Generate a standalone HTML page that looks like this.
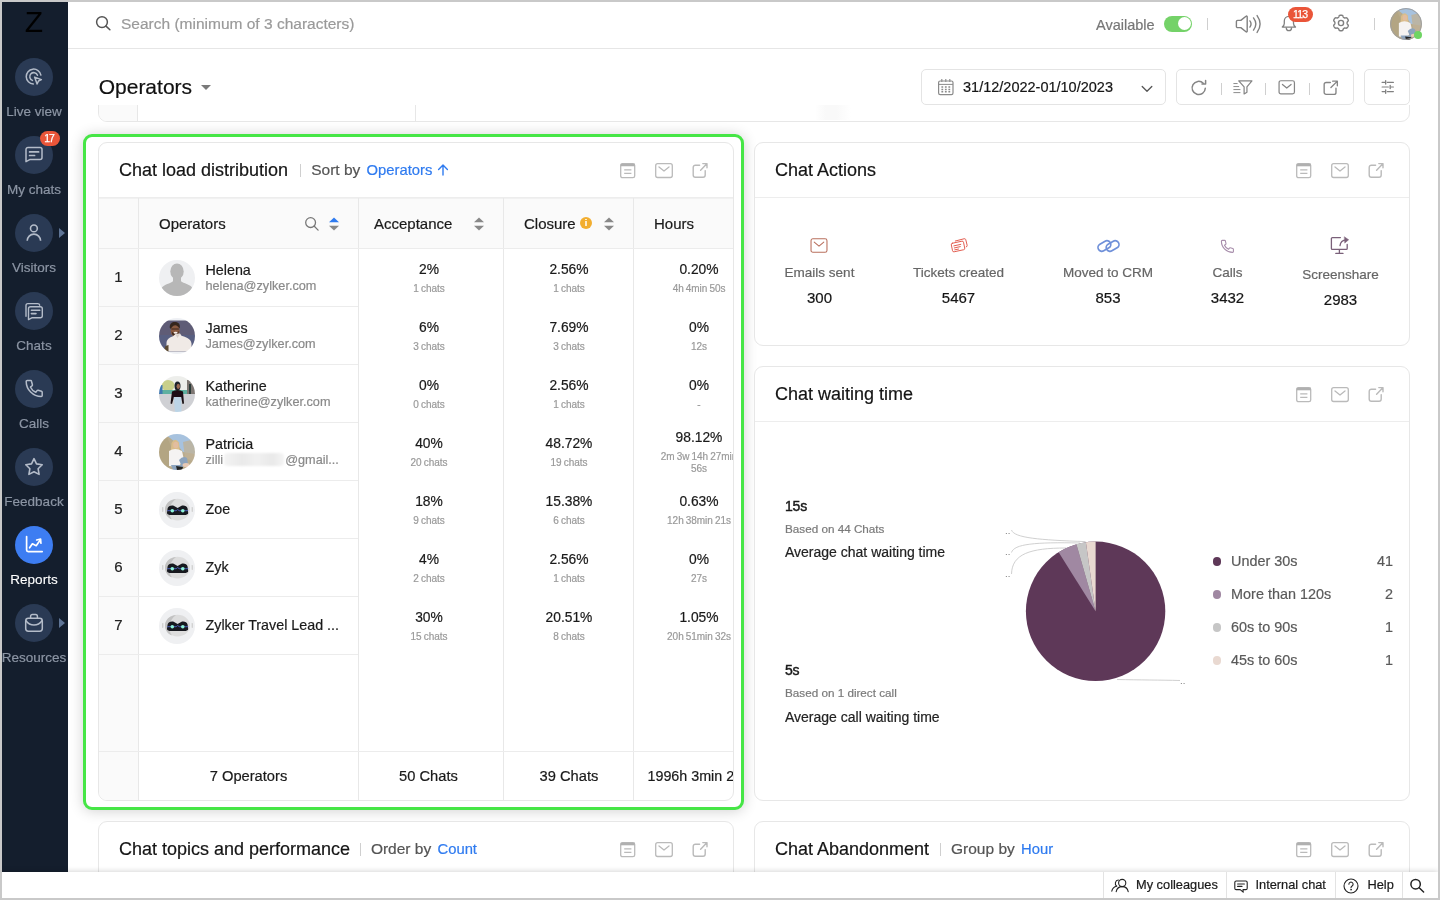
<!DOCTYPE html>
<html lang="en">
<head>
<meta charset="utf-8">
<title>Operators - Reports</title>
<style>
*{box-sizing:border-box;margin:0;padding:0}
html,body{width:1440px;height:900px;overflow:hidden;background:#c9c9c9;font-family:"Liberation Sans",sans-serif;color:#111;-webkit-text-stroke:.2px}
#app{position:absolute;left:2px;top:2px;width:1436px;height:896px;background:#fff;overflow:hidden;will-change:transform}
.abs{position:absolute}
svg{display:block;overflow:visible}
/* sidebar */
#side{position:absolute;left:0;top:0;width:66px;height:896px;background:#141e2d}
.nav{position:absolute;left:0;width:66px;height:78px}
.nav .c{position:absolute;left:13px;top:0;width:38px;height:38px;border-radius:50%;background:#2a3a54}
.nav .c svg{position:absolute;left:9px;top:9px}
.nav .t{position:absolute;left:-11px;width:86px;top:45px;text-align:center;font-size:13.5px;line-height:18px;color:#8c95a4;white-space:nowrap}
.nav.on .c{background:#3d7df2}
.nav.on .t{color:#fff;-webkit-text-stroke:.1px}
.nav .ar{position:absolute;left:57px;top:13.500px;width:0;height:0;border-left:6px solid #5f7596;border-top:5.500px solid transparent;border-bottom:5.500px solid transparent}
.badge{position:absolute;background:#ea5539;color:#fff;font-weight:400;-webkit-text-stroke:.25px #fff;text-align:center;border-radius:10px}
/* top bar */
#top{position:absolute;left:66px;top:0;width:1370px;height:47px;background:#fff;border-bottom:1px solid #e6e6e6}
/* cards */
.card{position:absolute;background:#fff;border:1px solid #e7e7e7;border-radius:9px}
.card .hd{position:absolute;left:0;top:0;right:0;height:55px;border-bottom:1px solid #ededed}
.ttl{position:absolute;left:20px;top:16px;font-size:18px;line-height:22px;color:#151515;white-space:nowrap}
.sub{position:absolute;top:17px;font-size:15.500px;line-height:20px;color:#555;white-space:nowrap}
.sub b{font-weight:400;color:#2f7bf0;font-size:14.800px}
.vsep{position:absolute;width:1px;background:#cfcfcf}
.hic{position:absolute;top:18.800px;margin-left:-1.500px}
.hl{position:absolute;left:81px;top:132px;width:661px;height:676px;border:3px solid #46e646;border-radius:9px;box-shadow:0 1px 14px rgba(0,0,0,.19);background:#fff}
.hic{width:20px;height:18px}
.tb{position:absolute;left:0;top:1px;width:634px;height:656px}
.th{position:absolute;left:0;top:54px;width:634px;height:50px;background:#fafafa;border-top:1px solid #f1f1f1}
.ixbg{position:absolute;left:0;top:104px;width:39px;height:552px;background:#fafafa}
.vl{position:absolute;top:54px;width:1px;height:602px;background:#e8e8e8}
.hl2{position:absolute;height:1px;background:#ececec}
.thl{position:absolute;top:70px;font-size:15px;line-height:20px;color:#1a1a1a;white-space:nowrap}
.r{position:absolute;left:0;width:700px;height:57px}
.ix{position:absolute;left:0;width:39px;top:18.200px;text-align:center;font-size:15px;line-height:20px;color:#222}
.av{position:absolute;left:60px;top:10.500px;width:36px;height:36px}
.nm{position:absolute;left:106.500px;top:10.500px;font-size:14.300px;line-height:20px;color:#1a1a1a;white-space:nowrap}
.nm.one{top:18px}
.em{position:absolute;left:106.500px;top:28.300px;font-size:12.700px;line-height:18px;color:#8a8a8a;white-space:nowrap}
.blur{display:inline-block;width:60px;height:13px;vertical-align:-2px;margin:0 1px;background:linear-gradient(90deg,#f3f3f3,#eaeaea 30%,#f1f1f1 55%,#e9e9e9 80%,#f4f4f4);border-radius:4px;filter:blur(1.200px);overflow:hidden;color:transparent}
.v{position:absolute;width:140px;top:0;text-align:center}
.v .p{position:absolute;left:1px;width:140px;top:11px;font-size:13.800px;line-height:20px;color:#1a1a1a}
.v .s{position:absolute;left:1px;width:140px;top:33.500px;font-size:10px;line-height:12px;color:#9a9a9a;word-spacing:-.6px;letter-spacing:-.05px}
.v.two .p{top:5px}
.v.two .s{top:27.500px}
.ft{position:absolute;top:622px;font-size:14.700px;line-height:20px;color:#1a1a1a;text-align:center;white-space:nowrap}
.ca{position:absolute;top:95px;width:140px;height:80px;text-align:center}
.ca svg{margin:0 auto}
.ca .l{position:absolute;left:-20px;width:180px;top:25.700px;font-size:13.500px;line-height:18px;color:#666;white-space:nowrap}
.ca .n{position:absolute;left:0;width:140px;top:49.500px;font-size:15px;line-height:20px;color:#151515}
.w1{position:absolute;left:30px;margin-top:0;font-size:14px;line-height:20px;font-weight:400;color:#1a1a1a;-webkit-text-stroke:.45px #1a1a1a;letter-spacing:-.2px}
.w2{position:absolute;left:30px;margin-top:1px;font-size:11.700px;line-height:16px;color:#7a7a7a;white-space:nowrap}
.w3{position:absolute;left:30px;margin-top:0;font-size:14px;line-height:20px;color:#222;white-space:nowrap}
.lg{position:absolute;left:457.500px;margin-top:-.500px;width:180.500px;height:20px;font-size:14.400px;line-height:20px;color:#5a5a5a;padding-left:18.600px;white-space:nowrap}
.lg i{position:absolute;left:.300px;top:6.700px;width:8.400px;height:8.400px;border-radius:50%}
.lg b{position:absolute;right:0;top:0;font-weight:400}
#bot{position:absolute;left:0;top:870px;width:1436px;height:26px;background:#fff;box-shadow:0 -1px 5px rgba(0,0,0,.16)}
.bd{position:absolute;top:0;width:1px;height:26px;background:#e3e3e3}
.bt{position:absolute;top:4px;font-size:12.800px;line-height:18px;color:#1a1a1a;white-space:nowrap}
</style>
</head>
<body>
<div id="app">
<svg width="0" height="0" style="position:absolute">
 <defs>
  <symbol id="i-panel" viewBox="0 0 20 18" fill="none" stroke="#bababa"><rect x="2.700" y="1.700" width="14" height="14" rx="1.800" stroke-width="1.300"/><path d="M2.700 3h14" stroke-width="2.600" stroke="#b0b0b0"/><path d="M6.200 7.800h7.200M6.200 11.400h7.200" stroke-width="1.200"/></symbol>
  <symbol id="i-mail" viewBox="0 0 20 18" fill="none" stroke="#bababa" stroke-width="1.300" stroke-linecap="round" stroke-linejoin="round"><rect x="1.700" y="1.700" width="16.600" height="13.800" rx="2"/><path d="M5 5l5 4 5-4"/></symbol>
  <symbol id="i-exp" viewBox="0 0 20 18" fill="none" stroke="#bababa" stroke-width="1.400" stroke-linecap="round" stroke-linejoin="round"><path d="M14.200 8.600v4.400a2.200 2.200 0 0 1-2.200 2.200H4.400a2.200 2.200 0 0 1-2.200-2.200V5.400a2.200 2.200 0 0 1 2.200-2.200h4.200"/><path d="M9.600 8.200l6-6.200M11.800 1.600h4.200v4.200"/></symbol>

  <clipPath id="cc"><circle cx="18" cy="18" r="18"/></clipPath><filter id="bl" x="-10%" y="-10%" width="120%" height="120%"><feGaussianBlur stdDeviation=".55"/></filter>
  <symbol id="av-def" viewBox="0 0 36 36"><g clip-path="url(#cc)"><rect width="36" height="36" fill="#eff0f2"/><ellipse cx="18" cy="11.400" rx="6.700" ry="8" fill="#b7b7b7"/><path d="M14 17h8v4.200c2.500 2.300 9 2.800 11 6.300l-2 9H5l-2.500-8.500c2.500-4 9-4.300 11.500-6.800z" fill="#b7b7b7"/></g></symbol>
  <symbol id="av-james" viewBox="0 0 36 36"><g clip-path="url(#cc)"><g filter="url(#bl)"><rect width="36" height="36" fill="#eef0f4"/><rect y="2.500" width="36" height="31" fill="#5e5c76"/><rect y="17" width="36" height="16.500" fill="#56608a" opacity=".55"/>
   <path d="M10.800 9.500c-.5-3.500 2-5.500 5-5.500s5.500 1.500 5 5.500l-1 1.500h-8z" fill="#35261f"/><ellipse cx="16.200" cy="13" rx="4.500" ry="5.700" fill="#8a5a40"/><path d="M12.600 13.500q3.500 4.500 7.200-.5l-.5 3.500q-3 3-6 0z" fill="#3f2a1e"/><ellipse cx="16.600" cy="14.800" rx="2" ry="1" fill="#f4ebe6"/><rect x="12.400" y="10.600" width="7.600" height="1" rx=".5" fill="#2c1d16" opacity=".8"/>
   <path d="M7.500 33.500v-8c0-4 3-6 6.500-7.200l2.500-2.300 4.500-.5 1.500 2.300c4 1.200 9.500 2.700 10 7.700v8z" fill="#f0eae6"/><path d="M16.500 16.500l2 3.500 2.500-4z" fill="#d9cfc8"/><path d="M4.500 33.500l2-5.500 3-1v6.500z" fill="#5a4a30"/></g></g></symbol>
  <symbol id="av-kath" viewBox="0 0 36 36"><g clip-path="url(#cc)"><g filter="url(#bl)"><rect width="36" height="36" fill="#d9d9d9"/><rect width="36" height="15" fill="#edeeeb"/><ellipse cx="9" cy="9.500" rx="6.500" ry="5.500" fill="#c8cf8a"/><rect y="14" width="29" height="4.500" fill="#5fb0a0"/><rect x="0" y="9" width="3.500" height="9" fill="#3f78b0"/><rect x="28" y="4" width="8" height="17" fill="#7d7672"/><rect x="30" y="8" width="2" height="10" fill="#2c3a38"/><rect y="18" width="36" height="18" fill="#cfd0d4"/>
   <ellipse cx="18.500" cy="10" rx="3" ry="4.600" fill="#1d2229"/><ellipse cx="19.300" cy="10.300" rx="1.700" ry="2.600" fill="#9b6a52"/><path d="M13 15.500q5.500-3 11 0l1 12-1.500.5-1.500-7h-7l-2 7-1.500-.5z" fill="#1a1114"/><path d="M14.800 21h7.400l.3 15h-6.500z" fill="#bcd4e6"/></g></g></symbol>
  <symbol id="av-pat" viewBox="0 0 36 36"><g clip-path="url(#cc)"><g filter="url(#bl)"><rect width="36" height="36" fill="#b9ab8c"/><path d="M6 0h30v20l-12-2-8-10z" fill="#a7c2de"/><path d="M0 6l8-3 6 14-4 19H0z" fill="#b3a583"/><path d="M24 8l8-2 4 8v14l-10-4z" fill="#bfb297" opacity=".8"/>
   <path d="M12.500 9q3.500-6 7.500-.5l.8 8-2 3h-5l-2-3z" fill="#d9bd8a"/><ellipse cx="16.800" cy="11" rx="2.600" ry="3.300" fill="#e2bd9f"/><path d="M10 17q6-4 13 0l2 9-6 7-9-1z" fill="#f5f3f2"/><path d="M20 26q4-5 8-2l1 6-6 3z" fill="#8ca3bd"/><path d="M12 31h12l-2 5h-8z" fill="#8ca3bd"/><ellipse cx="27" cy="31" rx="3.500" ry="2" fill="#e8c9b4"/><path d="M17 32l7 1-1 3h-5z" fill="#222"/></g></g></symbol>
  <symbol id="av-bot" viewBox="0 0 36 36"><g clip-path="url(#cc)"><rect width="36" height="36" fill="#eff0f2"/><g transform="translate(0 -.6)"><rect x="3" y="15.500" width="1.400" height="5" rx=".7" fill="#d2d2d2"/><rect x="32.600" y="15.500" width="1.400" height="5" rx=".7" fill="#d2d2d2"/><ellipse cx="18.500" cy="18.200" rx="12.500" ry="10.800" fill="#dddddd"/><path d="M17 7.500C10 8 6 13 6 18.200c0 4.800 2.800 8.400 7 10-4-5-4-15 4-20.700z" fill="#c2c2c2"/>
   <path d="M8.600 17c.5-2.500 4-3.500 6.500-2.500l3.500 2 3.500-2c2.500-1 6 0 6.500 2.500l.6 4.500c0 1.500-2 2-4 2H12c-2 0-4-.5-4-2z" fill="#17191f"/><path d="M8.200 19.300h3l1-.6 2.500.6h2.500l1.500-1.200 1.500 1.200h2.500l2.500-.4 1 .4h3" stroke="#4f63c4" stroke-width=".9" fill="none"/><circle cx="13.300" cy="19.300" r="1.800" fill="#8df2d8"/><circle cx="23.800" cy="19.300" r="1.800" fill="#8df2d8"/></g></g></symbol>
 </defs>
</svg>

<!-- SIDEBAR -->
<div id="side">
  <div class="abs" style="left:-1px;top:1.500px;width:66px;text-align:center;font-size:30px;line-height:36px;color:#000;-webkit-text-stroke:0">Z</div>

  <div class="nav" style="top:56px"><div class="c"><svg width="20" height="20" viewBox="0 0 20 20" fill="none" stroke="#b4bcc9" stroke-width="1.5" stroke-linecap="round" stroke-linejoin="round"><path d="M16.9 8.1A7.4 7.4 0 1 0 9.3 16.9"/><path d="M13.5 8.2A4 4 0 1 0 8.4 13.4"/><path d="M10.6 10.1l6.800 2.500-2.900 1.400-1.400 3z"/></svg></div><div class="t">Live view</div></div>

  <div class="nav" style="top:134px"><div class="c"><svg width="20" height="20" viewBox="0 0 20 20" fill="none" stroke="#b4bcc9" stroke-width="1.5" stroke-linecap="round" stroke-linejoin="round"><path d="M4 2.4h12a2 2 0 0 1 2 2v8a2 2 0 0 1-2 2H6.2L2 16.6V4.4a2 2 0 0 1 2-2z"/><path d="M5.6 6.9h9M5.6 10.5h5" stroke-width="1.7"/></svg></div><div class="t">My chats</div>
    <div class="badge" style="left:37.500px;top:-5px;width:20px;height:15px;font-size:10.500px;line-height:15.500px;letter-spacing:-1px;padding-right:1px">17</div></div>

  <div class="nav" style="top:212px"><div class="c"><svg width="20" height="20" viewBox="0 0 20 20" fill="none" stroke="#b4bcc9" stroke-width="1.6" stroke-linecap="butt"><circle cx="9.9" cy="5.4" r="3.4"/><path d="M3.2 17.8a6.7 6.7 0 0 1 13.4 0"/></svg></div><div class="ar"></div><div class="t">Visitors</div></div>

  <div class="nav" style="top:290px"><div class="c"><svg width="20" height="20" viewBox="0 0 20 20" fill="none" stroke="#b4bcc9" stroke-width="1.4" stroke-linecap="round" stroke-linejoin="round"><path d="M2 15.300V4.400a1.800 1.800 0 0 1 1.800-1.800h10a2 2 0 0 1 1.900 1.600"/><path d="M6.5 5.7h9.8a2 2 0 0 1 2 2v7a2 2 0 0 1-2 2H8.2l-3.7 1.9V7.7a2 2 0 0 1 2-2z"/><path d="M7.4 9.3h8.4M7.4 12.6h4.6" stroke-width="1.6"/></svg></div><div class="t">Chats</div></div>

  <div class="nav" style="top:368px"><div class="c"><svg width="20" height="20" viewBox="0 0 20 20" fill="none" stroke="#b4bcc9" stroke-width="1.5" stroke-linecap="round" stroke-linejoin="round"><path d="M3.2 1.4h3.3a1 1 0 0 1 1 .8l.9 3.6a1 1 0 0 1-.4 1L6.4 8c1 2.300 2.900 4.200 5.400 5.300l1.300-1.700a1 1 0 0 1 1-.3l3.400 1a1 1 0 0 1 .7 1v3.200a1 1 0 0 1-1 1C9 17.400 2.200 10.600 2.200 2.400a1 1 0 0 1 1-1z"/></svg></div><div class="t">Calls</div></div>

  <div class="nav" style="top:446px"><div class="c"><svg width="20" height="20" viewBox="0 0 20 20" fill="none" stroke="#b4bcc9" stroke-width="1.6" stroke-linejoin="round"><path d="M10 1.700l2.500 5.200 5.700.800-4.100 4 1 5.700L10 14.700 4.900 17.400l1-5.700-4.100-4 5.700-.8z"/></svg></div><div class="t">Feedback</div></div>

  <div class="nav on" style="top:524px"><div class="c"><svg width="20" height="20" viewBox="0 0 20 20" fill="none" stroke="#fff" stroke-width="1.7" stroke-linecap="round" stroke-linejoin="round"><path d="M2.600 1.600v13.400a1.600 1.600 0 0 0 1.600 1.600h14"/><path d="M5.600 12.800l2.800-4 3.800 1.900 3.700-5.100"/><path d="M12.700 5l3.900-.8.300 4"/></svg></div><div class="t">Reports</div></div>

  <div class="nav" style="top:602px"><div class="c"><svg width="20" height="20" viewBox="0 0 20 20" fill="none" stroke="#b4bcc9" stroke-width="1.5" stroke-linecap="round" stroke-linejoin="round"><rect x="1.700" y="5.300" width="16.600" height="12.900" rx="2.600"/><path d="M6.600 5.200V3.200a1.800 1.800 0 0 1 1.800-1.800h3.200a1.800 1.800 0 0 1 1.800 1.800v2"/><path d="M2 7.800c2 2.800 5 4.200 8 4.200s6-1.400 8-4.200"/></svg></div><div class="ar"></div><div class="t">Resources</div></div>
</div>


<!-- TOP BAR -->
<div id="top">
  <svg class="abs" style="left:27px;top:13px" width="18" height="18" viewBox="0 0 18 18" fill="none" stroke="#555" stroke-width="1.5" stroke-linecap="round"><circle cx="7" cy="7.100" r="5.400"/><path d="M11 11.100l3.900 3.700"/></svg>
  <div class="abs" style="left:53px;top:12px;font-size:15.5px;line-height:20px;color:#9a9a9a;white-space:nowrap">Search (minimum of 3 characters)</div>

  <div class="abs" style="left:1028px;top:13px;font-size:14.5px;line-height:20px;color:#777;white-space:nowrap">Available</div>
  <div class="abs" style="left:1096px;top:13.500px;width:28px;height:16px;border-radius:8px;background:#74d268"><div class="abs" style="right:1.500px;top:1.500px;width:13px;height:13px;border-radius:50%;background:#fff"></div></div>
  <div class="vsep" style="left:1139px;top:16px;height:12px"></div>
  <!-- sound -->
  <svg class="abs" style="left:1167px;top:12px" width="27" height="20" viewBox="0 0 27 20" fill="none" stroke="#808080" stroke-width="1.400" stroke-linecap="round" stroke-linejoin="round"><path d="M2.600 6.400h3.200l5.200-4.200a.700.700 0 0 1 1.200.5v14.600a.700.700 0 0 1-1.200.5l-5.200-4.200H2.600a1.200 1.200 0 0 1-1.200-1.200V7.600a1.200 1.200 0 0 1 1.200-1.200z"/><path d="M14.900 6.900q2.300 3.100 0 6.200"/><path d="M18.500 3.900q4.700 6.100 0 12.200"/><path d="M22.100 1.600q6 8.400 0 16.800"/></svg>
  <!-- bell -->
  <svg class="abs" style="left:1211px;top:13px" width="20" height="18" viewBox="0 0 20 18" fill="none" stroke="#808080" stroke-width="1.300" stroke-linecap="round" stroke-linejoin="round"><path d="M5.300 8.600V6a4.600 4.600 0 0 1 9.200 0v2.600c0 1.500.8 2.600 2 3.500H3.300c1.200-.9 2-2 2-3.500z"/><path d="M7.300 12.900a2.600 2.800 0 0 0 5.200 0"/></svg>
  <div class="badge" style="left:1220px;top:5px;width:25px;height:15px;font-size:10.500px;line-height:15.500px;letter-spacing:-.800px;padding-right:.800px">113</div>
  <!-- gear -->
  <svg class="abs" style="left:1264px;top:12.400px" width="18" height="18" viewBox="0 0 18 18" fill="none" stroke="#808080" stroke-width="1.400" stroke-linejoin="round"><path d="M15.10 9.00 L15.10 8.68 L15.14 8.35 L15.28 8.01 L15.66 7.59 L16.11 7.09 L16.29 6.63 L16.25 6.22 L16.12 5.83 L15.95 5.46 L15.75 5.10 L15.54 4.75 L15.30 4.42 L15.03 4.11 L14.70 3.87 L14.21 3.79 L13.55 3.94 L13.00 4.06 L12.63 4.01 L12.33 3.88 L12.05 3.72 L11.77 3.56 L11.51 3.36 L11.28 3.06 L11.10 2.53 L10.91 1.89 L10.59 1.50 L10.21 1.33 L9.81 1.25 L9.41 1.21 L9.00 1.20 L8.59 1.21 L8.19 1.25 L7.79 1.33 L7.41 1.50 L7.09 1.89 L6.90 2.53 L6.72 3.06 L6.49 3.36 L6.23 3.56 L5.95 3.72 L5.67 3.88 L5.37 4.01 L5.00 4.06 L4.45 3.94 L3.79 3.79 L3.30 3.87 L2.97 4.11 L2.70 4.42 L2.46 4.75 L2.25 5.10 L2.05 5.46 L1.88 5.83 L1.75 6.22 L1.71 6.63 L1.89 7.09 L2.34 7.59 L2.72 8.01 L2.86 8.35 L2.90 8.68 L2.90 9.00 L2.90 9.32 L2.86 9.65 L2.72 9.99 L2.34 10.41 L1.89 10.91 L1.71 11.37 L1.75 11.78 L1.88 12.17 L2.05 12.54 L2.25 12.90 L2.46 13.25 L2.70 13.58 L2.97 13.89 L3.30 14.13 L3.79 14.21 L4.45 14.06 L5.00 13.94 L5.37 13.99 L5.67 14.12 L5.95 14.28 L6.23 14.44 L6.49 14.64 L6.72 14.94 L6.90 15.47 L7.09 16.11 L7.41 16.50 L7.79 16.67 L8.19 16.75 L8.59 16.79 L9.00 16.80 L9.41 16.79 L9.81 16.75 L10.21 16.67 L10.59 16.50 L10.91 16.11 L11.10 15.47 L11.28 14.94 L11.51 14.64 L11.77 14.44 L12.05 14.28 L12.33 14.12 L12.63 13.99 L13.00 13.94 L13.55 14.06 L14.21 14.21 L14.70 14.13 L15.03 13.89 L15.30 13.58 L15.54 13.25 L15.75 12.90 L15.95 12.54 L16.12 12.17 L16.25 11.78 L16.29 11.37 L16.11 10.91 L15.66 10.41 L15.28 9.99 L15.14 9.65 L15.10 9.32Z"/><circle cx="9" cy="9" r="2.600"/></svg>
  <div class="vsep" style="left:1306px;top:16px;height:12px"></div>
  <!-- avatar -->
  <svg class="abs" style="left:1322px;top:6px" width="32" height="32" viewBox="0 0 36 36"><use href="#av-pat" width="36" height="36"/><circle cx="18" cy="18" r="17.400" fill="none" stroke="#a0a0a0" stroke-width="1.100"/></svg>
  <div class="abs" style="left:1346px;top:29px;width:8px;height:8px;border-radius:50%;background:#6fd463"></div>
</div>


<!-- MAIN -->
<div id="main">
  <!-- previous card fragment -->
  <div class="card" style="left:96px;top:60px;width:1312px;height:60px"></div>
  <div class="abs" style="left:97px;top:100px;width:38px;height:19px;background:#fafafa;border-bottom-left-radius:8px"></div>
  <div class="abs" style="left:135px;top:100px;width:1px;height:19px;background:#e7e7e7"></div>
  <div class="abs" style="left:413px;top:100px;width:1px;height:19px;background:#e7e7e7"></div>
  <div class="abs" style="left:813px;top:103px;width:36px;height:15px;background:linear-gradient(90deg,#fff,#f9f9f9 30%,#f9f9f9 60%,#fff)"></div>
  <!-- title bar (covers) -->
  <div class="abs" style="left:66px;top:48px;width:1370px;height:55px;background:#fff"></div>
  <div class="abs" style="left:96.700px;top:71.500px;font-size:21px;line-height:26px;color:#111;white-space:nowrap">Operators</div>
  <div class="abs" style="left:199px;top:82.500px;width:0;height:0;border-top:5px solid #7a7a7a;border-left:5px solid transparent;border-right:5px solid transparent"></div>

  <!-- date box -->
  <div class="abs" style="left:919px;top:67px;width:245px;height:36px;border:1px solid #e4e4e4;border-radius:5px;background:#fff">
    <svg class="abs" style="left:15px;top:8px" width="18" height="18" viewBox="0 0 18 18" fill="none" stroke="#8a8a8a" stroke-width="1.200"><rect x="1.600" y="3" width="14.400" height="13.600" rx="1.600"/><path d="M1.600 6.400h14.400" stroke-width="1"/><path d="M4.800 1v3M8.800 1v3M12.800 1v3" stroke-width="1.100"/><path d="M4.400 9h1.800M7.900 9h1.800M11.400 9h1.800M4.400 11.400h1.800M7.900 11.400h1.800M11.400 11.400h1.800M4.400 13.800h1.800M7.900 13.800h1.800M11.400 13.800h1.800" stroke-width="1.500"/></svg>
    <div class="abs" style="left:41px;top:7px;font-size:14.500px;line-height:20px;color:#151515;white-space:nowrap">31/12/2022-01/10/2023</div>
    <svg class="abs" style="left:219px;top:15px" width="12" height="8" viewBox="0 0 12 8" fill="none" stroke="#555" stroke-width="1.300" stroke-linecap="round" stroke-linejoin="round"><path d="M1.200 1.500l4.800 4.800 4.800-4.800"/></svg>
  </div>
  <!-- actions box -->
  <div class="abs" style="left:1174px;top:67px;width:178px;height:36px;border:1px solid #e4e4e4;border-radius:5px;background:#fff">
    <svg class="abs" style="left:13px;top:8.500px" width="18" height="18" viewBox="0 0 18 18" fill="none" stroke="#858585" stroke-width="1.500" stroke-linecap="round" stroke-linejoin="round"><path d="M15.300 9.200a6.600 6.600 0 1 1-2-5"/><path d="M15.600 1.400v3.600h-3.600" /></svg>
    <div class="vsep" style="left:44px;top:13px;height:12px"></div>
    <svg class="abs" style="left:55px;top:9px" width="21" height="17" viewBox="0 0 22 18" fill="none" stroke="#858585" stroke-width="1.300" stroke-linecap="round" stroke-linejoin="round"><path d="M7 2h14l-5.300 6.400v5.600l-3 1.800V8.400z"/><path d="M1.800 4.800h3.600M1.800 8h5.200M1.800 11.200h6.600M1.800 14.400h6.600" stroke-width="1"/></svg>
    <div class="vsep" style="left:88px;top:13px;height:12px"></div>
    <svg class="abs" style="left:101px;top:9.500px" width="17.500" height="15" viewBox="0 0 18 16" fill="none" stroke="#858585" stroke-width="1.300" stroke-linecap="round" stroke-linejoin="round"><rect x=".8" y=".8" width="16.400" height="14" rx="2"/><path d="M4.400 4.800l4.600 3.800 4.600-3.800"/></svg>
    <div class="vsep" style="left:132px;top:13px;height:12px"></div>
    <svg class="abs" style="left:146px;top:9.500px" width="15.500" height="15.500" viewBox="0 0 16 16" fill="none" stroke="#858585" stroke-width="1.400" stroke-linecap="round" stroke-linejoin="round"><path d="M13.400 8.400v4.400a2 2 0 0 1-2 2H3.200a2 2 0 0 1-2-2V4.600a2 2 0 0 1 2-2h4.400"/><path d="M8.200 7.800l6.400-6.400M10 1.200h4.800V6"/></svg>
  </div>
  <!-- settings box -->
  <div class="abs" style="left:1362px;top:67px;width:46px;height:36px;border:1px solid #e4e4e4;border-radius:5px;background:#fff">
    <svg class="abs" style="left:15.500px;top:10px" width="13.500" height="14" viewBox="0 0 15 15" fill="none" stroke="#808080" stroke-width="1.250" stroke-linecap="round"><path d="M1.200 2.400h3M7 2.400h6.800M1.200 7.500h7M11.200 7.500h2.600M1.200 12.600h3M7 12.600h6.800"/><path d="M5.200 .6v3.600M10.200 5.700v3.600M5.200 10.800v3.600" stroke-width="1.500"/></svg>
  </div>
<!--CARDS-->
<div class="hl"></div>
<div class="card" id="c1" style="left:96px;top:140px;width:636px;height:659px;overflow:hidden">
 <div class="hd"><div class="ttl">Chat load distribution</div><div class="vsep" style="left:201px;top:21px;height:13px"></div><div class="sub" style="left:212.200px">Sort by <b style="margin-left:2px">Operators</b></div>
  <svg class="abs" style="left:338px;top:21px" width="12" height="12" viewBox="0 0 12 12" fill="none" stroke="#2f7bf0" stroke-width="1.400" stroke-linecap="round" stroke-linejoin="round"><path d="M6 11V1.200M1.600 5.400L6 1l4.400 4.400"/></svg>
  <svg class="hic" style="left:520px"><use href="#i-panel"/></svg><svg class="hic" style="left:556px"><use href="#i-mail"/></svg><svg class="hic" style="left:593px"><use href="#i-exp"/></svg></div>
 <div class="tb">
  <div class="th"></div>
  <div class="ixbg"></div>
  <div class="vl" style="left:39px"></div>
  <div class="vl" style="left:259px"></div>
  <div class="vl" style="left:404px"></div>
  <div class="vl" style="left:534px"></div>
  <div class="hl2" style="top:104px;left:0;width:634px"></div>
  <div class="hl2" style="top:162px;left:0;width:259px"></div>
  <div class="hl2" style="top:220px;left:0;width:259px"></div>
  <div class="hl2" style="top:278px;left:0;width:259px"></div>
  <div class="hl2" style="top:336px;left:0;width:259px"></div>
  <div class="hl2" style="top:394px;left:0;width:259px"></div>
  <div class="hl2" style="top:452px;left:0;width:259px"></div>
  <div class="hl2" style="top:510px;left:0;width:259px"></div>
  <div class="hl2" style="top:607px;left:0;width:634px"></div>
  <div class="thl" style="left:60px">Operators</div>
  <svg class="abs" style="left:205px;top:72px" width="16" height="16" viewBox="0 0 16 16" fill="none" stroke="#777" stroke-width="1.300" stroke-linecap="round"><circle cx="6.600" cy="6.600" r="4.900"/><path d="M10.300 10.300l3.800 3.800"/></svg>
  <svg class="abs" style="left:229px;top:73px" width="12" height="14" viewBox="0 0 12 14"><path d="M6 .4l5 4.800H1z" fill="#2f7bf0"/><path d="M6 13.600l5-4.800H1z" fill="#888"/></svg>
  <div class="thl" style="left:275px">Acceptance</div>
  <svg class="abs" style="left:374px;top:73px" width="12" height="14" viewBox="0 0 12 14"><path d="M6 .4l5 4.800H1z" fill="#888"/><path d="M6 13.600l5-4.800H1z" fill="#888"/></svg>
  <div class="thl" style="left:425px">Closure</div>
  <div class="abs" style="left:481px;top:72.500px;width:12px;height:12px;border-radius:50%;background:#f2ae30;color:#fff;font-size:9px;line-height:12px;text-align:center;font-weight:700">i</div>
  <svg class="abs" style="left:504px;top:73px" width="12" height="14" viewBox="0 0 12 14"><path d="M6 .4l5 4.800H1z" fill="#888"/><path d="M6 13.600l5-4.800H1z" fill="#888"/></svg>
  <div class="thl" style="left:555px">Hours</div>
  <div class="r" style="top:105px">
   <div class="ix">1</div><svg class="av"><use href="#av-def"/></svg>
   <div class="nm">Helena</div><div class="em">helena@zylker.com</div>
   <div class="v" style="left:259px"><div class="p">2%</div><div class="s">1 chats</div></div>
   <div class="v" style="left:399px"><div class="p">2.56%</div><div class="s">1 chats</div></div>
   <div class="v" style="left:529px"><div class="p">0.20%</div><div class="s">4h 4min 50s</div></div>
  </div>
  <div class="r" style="top:163px">
   <div class="ix">2</div><svg class="av"><use href="#av-james"/></svg>
   <div class="nm">James</div><div class="em">James@zylker.com</div>
   <div class="v" style="left:259px"><div class="p">6%</div><div class="s">3 chats</div></div>
   <div class="v" style="left:399px"><div class="p">7.69%</div><div class="s">3 chats</div></div>
   <div class="v" style="left:529px"><div class="p">0%</div><div class="s">12s</div></div>
  </div>
  <div class="r" style="top:221px">
   <div class="ix">3</div><svg class="av"><use href="#av-kath"/></svg>
   <div class="nm">Katherine</div><div class="em">katherine@zylker.com</div>
   <div class="v" style="left:259px"><div class="p">0%</div><div class="s">0 chats</div></div>
   <div class="v" style="left:399px"><div class="p">2.56%</div><div class="s">1 chats</div></div>
   <div class="v" style="left:529px"><div class="p">0%</div><div class="s">-</div></div>
  </div>
  <div class="r" style="top:279px">
   <div class="ix">4</div><svg class="av"><use href="#av-pat"/></svg>
   <div class="nm">Patricia</div><div class="em">zilli<span class="blur"></span>@gmail...</div>
   <div class="v" style="left:259px"><div class="p">40%</div><div class="s">20 chats</div></div>
   <div class="v" style="left:399px"><div class="p">48.72%</div><div class="s">19 chats</div></div>
   <div class="v two" style="left:529px"><div class="p">98.12%</div><div class="s">2m 3w 14h 27min<br>56s</div></div>
  </div>
  <div class="r" style="top:337px">
   <div class="ix">5</div><svg class="av"><use href="#av-bot"/></svg>
   <div class="nm one">Zoe</div>
   <div class="v" style="left:259px"><div class="p">18%</div><div class="s">9 chats</div></div>
   <div class="v" style="left:399px"><div class="p">15.38%</div><div class="s">6 chats</div></div>
   <div class="v" style="left:529px"><div class="p">0.63%</div><div class="s">12h 38min 21s</div></div>
  </div>
  <div class="r" style="top:395px">
   <div class="ix">6</div><svg class="av"><use href="#av-bot"/></svg>
   <div class="nm one">Zyk</div>
   <div class="v" style="left:259px"><div class="p">4%</div><div class="s">2 chats</div></div>
   <div class="v" style="left:399px"><div class="p">2.56%</div><div class="s">1 chats</div></div>
   <div class="v" style="left:529px"><div class="p">0%</div><div class="s">27s</div></div>
  </div>
  <div class="r" style="top:453px">
   <div class="ix">7</div><svg class="av"><use href="#av-bot"/></svg>
   <div class="nm one">Zylker Travel Lead ...</div>
   <div class="v" style="left:259px"><div class="p">30%</div><div class="s">15 chats</div></div>
   <div class="v" style="left:399px"><div class="p">20.51%</div><div class="s">8 chats</div></div>
   <div class="v" style="left:529px"><div class="p">1.05%</div><div class="s">20h 51min 32s</div></div>
  </div>
  <div class="ft" style="left:40px;width:219px">7 Operators</div><div class="ft" style="left:257.500px;width:144px">50 Chats</div><div class="ft" style="left:405.500px;width:129px">39 Chats</div><div class="ft" style="left:535px;width:130px;text-align:left;padding-left:13.500px;font-size:14.300px">1996h 3min 2</div>
 </div>
</div>
<!-- Chat Actions -->
<div class="card" style="left:752px;top:140px;width:656px;height:204px">
 <div class="hd"><div class="ttl">Chat Actions</div>
  <svg class="hic" style="left:540px"><use href="#i-panel"/></svg><svg class="hic" style="left:576px"><use href="#i-mail"/></svg><svg class="hic" style="left:613.500px"><use href="#i-exp"/></svg></div>
 <div class="ca" style="left:-6.300px"><svg width="18" height="15" viewBox="0 0 19 16" fill="none" stroke="#b9705e" stroke-width="1.150" stroke-linecap="round" stroke-linejoin="round"><rect x="1" y=".8" width="17" height="14.400" rx="2"/><path d="M4.400 4.400l5.100 4.300 5.100-4.300"/></svg><div class="l" style="margin-left:.8px">Emails sent</div><div class="n" style="margin-left:.8px">300</div></div>
 <div class="ca" style="left:133.500px"><svg width="18" height="15" viewBox="0 0 19 16" fill="none" stroke="#e15b4e" stroke-width="1.050" stroke-linecap="round" stroke-linejoin="round"><path d="M5.600 3.200l9.400-2.400a1.400 1.400 0 0 1 1.700 1l1.500 6a1.400 1.400 0 0 1-1 1.700"/><path d="M2.400 5.600l10.200-2.200a1.400 1.400 0 0 1 1.700 1.100l1.300 6.300a1.400 1.400 0 0 1-1.100 1.700L4.300 14.700a1.400 1.400 0 0 1-1.700-1.100L1.300 7.300a1.400 1.400 0 0 1 1.100-1.700z"/><path d="M4 8.400l7.400-1.600M4.500 10.600l6.400-1.400M5 12.600l4-.8"/></svg><div class="l">Tickets created</div><div class="n">5467</div></div>
 <div class="ca" style="left:283px"><svg width="25" height="16" viewBox="0 0 25 16" fill="none" stroke="#6f90d9" stroke-width="1.700"><rect x="-6.800" y="-3.800" width="13.600" height="7.600" rx="3.800" transform="translate(8.400 8) rotate(-30)"/><rect x="-6.800" y="-3.800" width="13.600" height="7.600" rx="3.800" transform="translate(16.600 8) rotate(-30)"/></svg><div class="l">Moved to CRM</div><div class="n">853</div></div>
 <div class="ca" style="left:402.500px"><svg width="15" height="16" viewBox="0 0 15 16" fill="none" stroke="#a78dab" stroke-width="1.100" stroke-linecap="round" stroke-linejoin="round" style="margin-top:1px"><path d="M2.200 1.400h2.400a.8.800 0 0 1 .8.600l.6 2.600a.8.800 0 0 1-.3.800L4.500 6.300c.8 1.800 2.200 3.200 4 4l.9-1.200a.8.800 0 0 1 .8-.3l2.600.7a.8.800 0 0 1 .6.800v2.300a.8.800 0 0 1-.8.800C6.500 13.400 1.400 8.300 1.400 2.200a.8.800 0 0 1 .8-.8z"/></svg><div class="l">Calls</div><div class="n">3432</div></div>
 <div class="ca" style="left:515.500px;top:93px"><svg width="21" height="19" viewBox="0 0 21 19" fill="none" stroke="#7a6079" stroke-width="1.300" stroke-linecap="round" stroke-linejoin="round"><path d="M17.200 8.400v4a1 1 0 0 1-1 1H2.400a1 1 0 0 1-1-1V2.600a1 1 0 0 1 1-1h8"/><path d="M9.400 13.600v3.600M5.800 17.400h7.200"/><path d="M10 9.600c.4-3.400 2.600-5.600 6.200-5.800"/><path d="M14.600 1l4 2.800-3.600 3z" fill="#7a6079" stroke-width=".6"/></svg><div class="l" style="top:29.500px">Screenshare</div><div class="n" style="top:53.500px">2983</div></div>
</div>

<!-- Chat waiting time -->
<div class="card" style="left:752px;top:364px;width:656px;height:435px">
 <div class="hd"><div class="ttl">Chat waiting time</div>
  <svg class="hic" style="left:540px"><use href="#i-panel"/></svg><svg class="hic" style="left:576px"><use href="#i-mail"/></svg><svg class="hic" style="left:613.500px"><use href="#i-exp"/></svg></div>
 <div class="w1" style="top:129px">15s</div><div class="w2" style="top:153px">Based on 44 Chats</div><div class="w3" style="top:175px">Average chat waiting time</div>
 <div class="w1" style="top:293px">5s</div><div class="w2" style="top:317px">Based on 1 direct call</div><div class="w3" style="top:339.500px">Average call waiting time</div>
 <svg class="abs" style="left:235px;top:149px" width="200" height="190" viewBox="990 516 200 190">
  <g fill="none" stroke="#c4c4c4" stroke-width=".8"><path d="M1085.500 541.600C1040 540 1014 538 1011.500 530"/><path d="M1080 543C1035 542 1014 544 1011.500 552.500"/><path d="M1066 548C1030 548 1012 554 1011.500 574"/><path d="M1117 679.500C1140 680 1160 680 1180 680.500"/></g>
  <g fill="#777" font-size="9.500" font-family="Liberation Sans, sans-serif"><text x="1005" y="533.500">..</text><text x="1005" y="555">..</text><text x="1005" y="576.500">..</text><text x="1180" y="683.500">..</text></g>
  <circle cx="1095.600" cy="611.300" r="69.700" fill="#5e3858"/>
  <path d="M1095.600 611.300L1058.660 552.190A69.700 69.700 0 0 1 1076.390 544.300z" fill="#a088a2"/>
  <path d="M1095.600 611.300L1076.390 544.300A69.700 69.700 0 0 1 1085.900 542.280z" fill="#c6c6c6"/>
  <path d="M1095.600 611.300L1085.900 542.280A69.700 69.700 0 0 1 1095.600 541.600z" fill="#e9d9d1"/>
 </svg>
 <div class="lg" style="top:184px"><i style="background:#5e3858"></i>Under 30s<b>41</b></div>
 <div class="lg" style="top:217px"><i style="background:#a088a2"></i>More than 120s<b>2</b></div>
 <div class="lg" style="top:250px"><i style="background:#c6c6c6"></i>60s to 90s<b>1</b></div>
 <div class="lg" style="top:283px"><i style="background:#e9d9d1"></i>45s to 60s<b>1</b></div>
</div>

<!-- Chat topics and performance -->
<div class="card" style="left:96px;top:819px;width:636px;height:120px">
 <div class="hd"><div class="ttl">Chat topics and performance</div><div class="vsep" style="left:261px;top:21px;height:13px"></div><div class="sub" style="left:271.900px">Order by <b style="margin-left:2px">Count</b></div>
  <svg class="hic" style="left:520px"><use href="#i-panel"/></svg><svg class="hic" style="left:556px"><use href="#i-mail"/></svg><svg class="hic" style="left:593px"><use href="#i-exp"/></svg></div>
</div>
<!-- Chat Abandonment -->
<div class="card" style="left:752px;top:819px;width:656px;height:120px">
 <div class="hd"><div class="ttl">Chat Abandonment</div><div class="vsep" style="left:185px;top:21px;height:13px"></div><div class="sub" style="left:196px">Group by <b style="margin-left:2px">Hour</b></div>
  <svg class="hic" style="left:540px"><use href="#i-panel"/></svg><svg class="hic" style="left:576px"><use href="#i-mail"/></svg><svg class="hic" style="left:613.500px"><use href="#i-exp"/></svg></div>
</div>
<!--/CARDS-->
</div>

<!-- BOTTOM BAR -->
<div id="bot">
 <div class="bd" style="left:1101px"></div><div class="bd" style="left:1224px"></div><div class="bd" style="left:1333px"></div><div class="bd" style="left:1400px"></div>
 <svg class="abs" style="left:1109px;top:6px" width="18" height="15" viewBox="0 0 18 15" fill="none" stroke="#222" stroke-width="1.100" stroke-linecap="round" stroke-linejoin="round"><circle cx="11.200" cy="5" r="3.600"/><path d="M5.200 13.600c.6-3 2.800-5 6-5s5.400 2 6 5"/><path d="M7.400 2a3.400 3.400 0 0 0-1.600 6.200M.8 13.200c.5-2.600 2.200-4.600 5-5"/></svg>
 <div class="bt" style="left:1134px">My colleagues</div>
 <svg class="abs" style="left:1232px;top:8px" width="14" height="13" viewBox="0 0 14 13" fill="none" stroke="#222" stroke-width="1.100" stroke-linecap="round" stroke-linejoin="round"><path d="M2.200 1h9.600a1.400 1.400 0 0 1 1.400 1.400v5.800a1.400 1.400 0 0 1-1.400 1.400H9l.2 2.600-3-2.600h-4A1.400 1.400 0 0 1 .8 8.200V2.400A1.400 1.400 0 0 1 2.200 1z"/><path d="M3.600 4h6.800M3.600 6.400h4.400"/></svg>
 <div class="bt" style="left:1253.500px">Internal chat</div>
 <svg class="abs" style="left:1341px;top:5.500px" width="16" height="16" viewBox="0 0 16 16" fill="none" stroke="#222" stroke-width="1.100" stroke-linecap="round"><circle cx="8" cy="8" r="7"/><path d="M5.900 6.200a2.100 2.100 0 1 1 3.200 1.800c-.7.500-1.100.9-1.100 1.700"/><circle cx="8" cy="11.700" r=".5" fill="#222" stroke-width=".6"/></svg>
 <div class="bt" style="left:1365.500px">Help</div>
 <svg class="abs" style="left:1407px;top:6px" width="16" height="16" viewBox="0 0 16 16" fill="none" stroke="#222" stroke-width="1.500" stroke-linecap="round"><circle cx="6.600" cy="6.200" r="4.700"/><path d="M10.200 9.800l4.400 4.200"/></svg>
</div>


</div>
</body>
</html>
